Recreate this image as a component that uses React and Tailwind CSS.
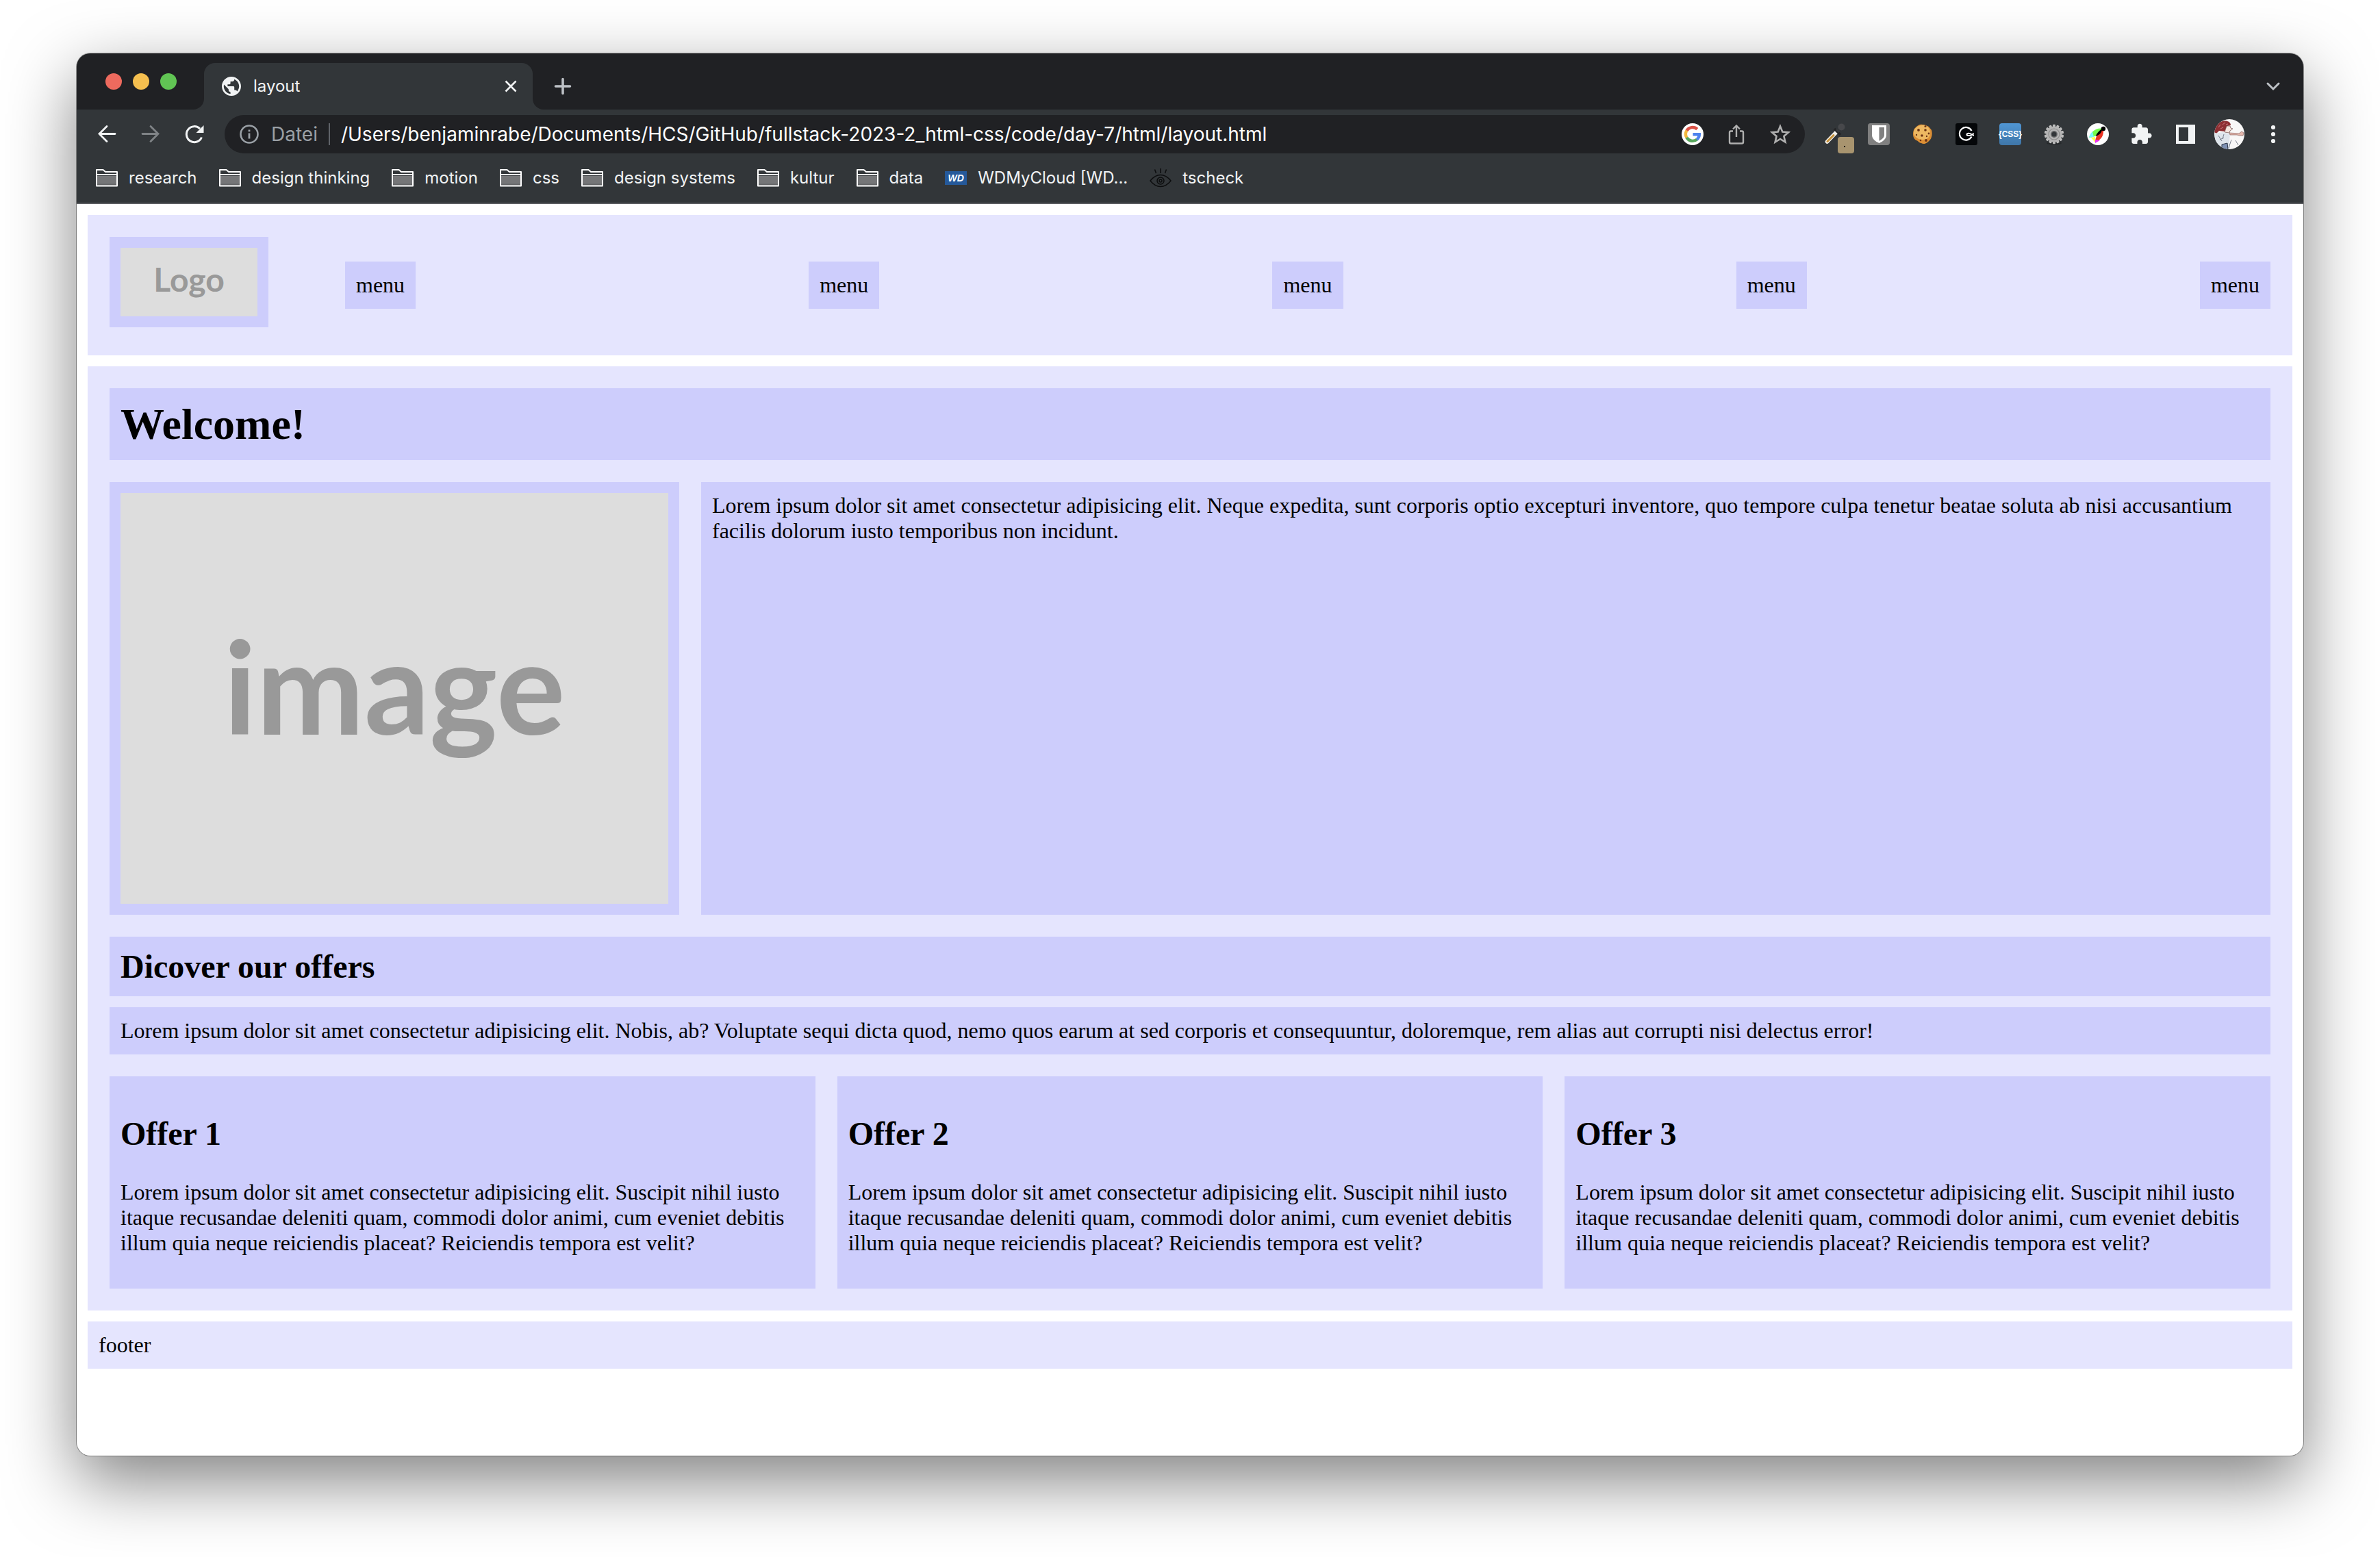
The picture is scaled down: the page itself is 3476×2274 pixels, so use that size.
import React from "react";
const UI = "font-['Inter','Liberation_Sans',sans-serif]";
const lorem = "Lorem ipsum dolor sit amet consectetur adipisicing elit.";
const heroText = `${lorem} Neque expedita, sunt corporis optio excepturi inventore, quo tempore culpa tenetur beatae soluta ab nisi accusantium facilis dolorum iusto temporibus non incidunt.`;
const introText = `${lorem} Nobis, ab? Voluptate sequi dicta quod, nemo quos earum at sed corporis et consequuntur, doloremque, rem alias aut corrupti nisi delectus error!`;
const offerText = `${lorem} Suscipit nihil iusto itaque recusandae deleniti quam, commodi dolor animi, cum eveniet debitis illum quia neque reiciendis placeat? Reiciendis tempora est velit?`;

function Svg({ size = "size-8", box = "0 0 32 32", label, children }) {
  return (
    <svg viewBox={box} className={`${size} shrink-0 overflow-visible`} fill="none" aria-hidden={label ? undefined : true} aria-label={label}>
      {children}
    </svg>
  );
}

function IconButton({ label, children }) {
  return (
    <button aria-label={label} className="flex w-16 shrink-0 items-center justify-center">
      {children}
    </button>
  );
}

function Globe() {
  return (
    <Svg size="size-7" box="2 2 20 20">
      <path fill="#f1f3f4" d="M12 2C6.480 2 2 6.480 2 12s4.480 10 10 10 10-4.480 10-10S17.520 2 12 2zm-1 17.930c-3.950-.49-7-3.850-7-7.930 0-.62.080-1.210.21-1.790L9 15v1c0 1.100.9 2 2 2v1.930zm6.900-2.540c-.26-.81-1-1.390-1.900-1.390h-1v-3c0-.55-.45-1-1-1H8v-2h2c.55 0 1-.45 1-1V7h2c1.100 0 2-.9 2-2v-.41c2.930 1.190 5 4.060 5 7.410 0 2.080-.8 3.970-2.100 5.390z" />
    </Svg>
  );
}

function Folder() {
  return (
    <Svg>
      <path d="M2 13h28v14H2z" fill="#757678" />
      <path d="M2 24.500h28V27H2z" fill="#636466" />
      <path d="M1 4h9.500l3.500 3h17v20.500H1zM1 11h30" stroke="#fff" strokeWidth="2" strokeLinejoin="round" />
    </Svg>
  );
}

function WdIcon() {
  return (
    <span className="flex h-5 w-8 shrink-0 items-center justify-center bg-[#25599a] font-['Liberation_Sans',sans-serif] text-sm font-bold italic leading-none text-white">
      WD
    </span>
  );
}

function EyeIcon() {
  return (
    <Svg>
      <path d="M1 20c4-5 9-8.500 15-8.500S27 15 31 20c-4 5-9 8.500-15 8.500S5 25 1 20zM16 2v7M7.500 3.500l2 5.500M24.500 3.500l-2 5.500" stroke="#0c0d0e" strokeWidth="1.500" />
      <circle cx="16" cy="20" r="5" stroke="#0c0d0e" strokeWidth="1.500" />
      <circle cx="16" cy="20" r="2" stroke="#0c0d0e" strokeWidth="1.500" />
    </Svg>
  );
}

const bookmarks = [
  ["research", Folder], ["design thinking", Folder], ["motion", Folder], ["css", Folder],
  ["design systems", Folder], ["kultur", Folder], ["data", Folder],
  ["WDMyCloud [WD...", WdIcon], ["tscheck", EyeIcon],
];

function TabStrip() {
  return (
    <div className="flex h-[82px] items-end bg-[#202124]">
      <div className="flex h-[82px] w-[186px] shrink-0 items-center gap-4 pl-[42px]">
        <button aria-label="Close window" className="size-6 rounded-full bg-[#ed6a5e]" />
        <button aria-label="Minimize window" className="size-6 rounded-full bg-[#f5bf4f]" />
        <button aria-label="Zoom window" className="size-6 rounded-full bg-[#61c554]" />
      </div>
      <div className="relative flex h-[68px] w-[480px] shrink-0 items-center rounded-t-2xl bg-[#323639] px-[26px]">
        <svg viewBox="0 0 16 16" className="absolute -left-4 bottom-0 size-4"><path d="M16 0v16H0A16 16 0 0 0 16 0z" fill="#323639" /></svg>
        <svg viewBox="0 0 16 16" className="absolute -right-4 bottom-0 size-4"><path d="M0 0v16h16A16 16 0 0 1 0 0z" fill="#323639" /></svg>
        <Globe />
        <span className="ml-[18px] flex-1 text-2xl leading-8 text-[#f1f3f4]">layout</span>
        <button aria-label="Close tab">
          <Svg size="size-3" box="0 0 12 12"><path d="M-1.500-1.500l15 15M13.500-1.500l-15 15" stroke="#f1f3f4" strokeWidth="2.600" /></Svg>
        </button>
      </div>
      <button aria-label="New tab" className="flex h-[68px] w-[88px] items-center justify-center">
        <Svg size="size-6" box="0 0 24 24"><path d="M12 1.500v21M1.500 12h21" stroke="#bdc1c6" strokeWidth="3.600" strokeLinecap="round" /></Svg>
      </button>
      <div className="flex-1" />
      <button aria-label="Search tabs" className="mr-3 flex h-[68px] w-16 items-center justify-center">
        <Svg size="size-5" box="0 0 20 20"><path d="M2 6l8 8 8-8" stroke="#bdc1c6" strokeWidth="3" strokeLinecap="round" /></Svg>
      </button>
    </div>
  );
}

function AddressBar() {
  return (
    <div className="flex h-14 min-w-0 flex-1 items-center rounded-full bg-[#202124] pl-[22px] pr-1">
      <Svg size="size-7" box="0 0 28 28">
        <circle cx="14" cy="14" r="12.500" stroke="#9aa0a6" strokeWidth="2.600" />
        <path d="M14 12.500v8M14 7.500v2.800" stroke="#9aa0a6" strokeWidth="2.800" />
      </Svg>
      <span className="ml-[18px] text-[28px] leading-8 text-[#9aa0a6]">Datei</span>
      <span className="ml-4 h-8 w-0.5 bg-[#5f6368]" />
      <input aria-label="Address" readOnly className="ml-4 min-w-0 flex-1 bg-transparent text-[28px] leading-9 text-white outline-none" value="/Users/benjaminrabe/Documents/HCS/GitHub/fullstack-2023-2_html-css/code/day-7/html/layout.html" />
      <IconButton label="Google">
        <Svg>
          <circle cx="16" cy="16" r="16" fill="#fff" />
          <path d="M7.400 10.800A10 10 0 0 1 22.800 8.700" stroke="#db5247" strokeWidth="4.400" />
          <path d="M7.500 21.100a10 10 0 0 1 0-10.500" stroke="#f4b93d" strokeWidth="4.400" />
          <path d="M22.400 23.600A10 10 0 0 1 7.400 20.900" stroke="#57a75c" strokeWidth="4.400" />
          <path d="M16.500 16.200h9.400a10 10 0 0 1-3.700 7.600" stroke="#4e83ee" strokeWidth="4.400" />
        </Svg>
      </IconButton>
      <IconButton label="Share">
        <Svg><path d="M11 11.500H8A2 2 0 0 0 6 13.500V27.500A2 2 0 0 0 8 29.500h16a2 2 0 0 0 2-2V13.500a2 2 0 0 0-2-2H21M16 20V4M11 8.500l5-5 5 5" stroke="#b0b0b0" strokeWidth="2.400" /></Svg>
      </IconButton>
      <IconButton label="Bookmark this page">
        <Svg><path d="M16 4.500l3.300 8 8.700.8-6.600 5.700 2 8.500L16 23l-7.400 4.500 2-8.500L4 13.300l8.700-.8z" stroke="#b0b0b0" strokeWidth="2.600" /></Svg>
      </IconButton>
    </div>
  );
}

const gearTeeth = Array.from({ length: 14 }, (_, i) => (i * 360) / 14);

function Extensions() {
  return (
    <div className="flex h-14 shrink-0 items-center px-3">
      <IconButton label="Color picker">
        <span className="relative size-8">
          <Svg>
            <path d="M4.500 27L18 13" stroke="#f4f1ea" strokeWidth="5.500" strokeLinecap="round" />
            <path d="M5 26.500L14 17.500" stroke="#c5913a" strokeWidth="3" strokeLinecap="round" />
            <path d="M15 8l9 9" stroke="#242526" strokeWidth="3.500" />
            <path d="M19 12l2-2" stroke="#38393b" strokeWidth="6" />
            <circle cx="25.500" cy="5.500" r="5" fill="#47484b" />
          </Svg>
          <span className="absolute left-5 top-5 flex size-6 items-center justify-center rounded bg-[#a8946f]"><span className="mt-1 mr-1 size-0.5 bg-black" /></span>
        </span>
      </IconButton>
      <IconButton label="Bitwarden">
        <Svg>
          <rect width="32" height="32" rx="4" fill="#808080" />
          <path d="M6 3h21v14c0 6-5 9.500-10.500 12C11 26.500 6 23 6 17z" fill="#fff" />
          <path d="M16.500 6H24v11c0 4-3.500 6.500-7.500 8.800z" fill="#808080" />
        </Svg>
      </IconButton>
      <IconButton label="Cookies">
        <Svg>
          <path d="M16 2c3-.5 5 1 7 2 3 1 4 4 6 6 1 3 1 7 0 10-1 4-4 6-6 8-3 2-6 3-9 1-3 0-4-3-7-4-4-2-5-6-5-9 0-4 1-8 4-10 3-3 6-5 10-4z" fill="#dc8f35" />
          <path d="M15 3c7-1 12 4 12 11s-5 10-11 10S3 20 3 14 8 3 15 3z" fill="#edb862" />
          <g fill="#6d3415"><circle cx="10" cy="10" r="1.900" /><circle cx="20" cy="10" r="1.800" /><circle cx="15" cy="18" r="1.800" /><circle cx="7" cy="17" r="1.200" /><circle cx="25" cy="15" r="1.400" /><circle cx="21" cy="25" r="1.900" /><circle cx="22" cy="19" r="1.200" /><circle cx="13" cy="25" r="1.300" /><circle cx="20" cy="4.500" r="1.500" /></g>
        </Svg>
      </IconButton>
      <IconButton label="Grammar">
        <Svg>
          <rect width="32" height="32" rx="3" fill="#050709" />
          <path d="M23.500 11A9.300 9.300 0 1 0 23.500 19.500" stroke="#fff" strokeWidth="2.200" />
          <path d="M26.500 14.500c-2 3-4.500 3.600-7 3.600-4 0-4-3.400 0-3.400 3 0 4 2.500 7.500 3" stroke="#fff" strokeWidth="1.900" />
        </Svg>
      </IconButton>
      <IconButton label="CSS viewer">
        <span className="flex size-8 items-center justify-center rounded-sm bg-linear-to-b from-[#5096d4] to-[#3f76a8] font-['Liberation_Sans',sans-serif] text-xs font-bold leading-none text-white">{"{CSS}"}</span>
      </IconButton>
      <IconButton label="Settings">
        <Svg>
          <ellipse cx="16" cy="29" rx="11" ry="2.500" fill="#26292b" />
          {gearTeeth.map((a) => <rect key={a} x="14" y="1.800" width="4" height="7" rx="1" fill="#bdbdbd" transform={`rotate(${a} 16 16)`} />)}
          <circle cx="16" cy="16" r="8" stroke="#b4b4b4" strokeWidth="7" />
          <circle cx="16" cy="16" r="8" stroke="#8c8c8c" strokeWidth="1.200" />
          <circle cx="16" cy="16" r="5" fill="#6a6b6c" />
          <circle cx="16" cy="16" r="3.500" fill="#323639" />
        </Svg>
      </IconButton>
      <IconButton label="Color blindness">
        <Svg>
          <circle cx="16" cy="16" r="16" fill="#fff" />
          <path d="M3 21C6 12 14 6 23 8c-3 7-9 12-20 13z" fill="#75fb4c" />
          <path d="M3 21c1-4 3-7 5-9l2 8z" fill="#7df9f9" />
          <path d="M12 28c0-8 4-14 12-20 1 10-3 16-12 20z" fill="#eb3223" />
          <path d="M6 21l6-1v8z" fill="#ffff54" />
          <path d="M12 29v-5l7 1z" fill="#ea33f7" />
          <path d="M12.500 19c2-5 6-9 10-11-1 6-4 9-10 11z" fill="#000" />
          <circle cx="24" cy="8" r="3.200" fill="#000" />
        </Svg>
      </IconButton>
      <IconButton label="Extensions">
        <Svg box="1 .5 23 23"><path fill="#f1f3f4" d="M20.500 11H19V7c0-1.100-.9-2-2-2h-4V3.500C13 2.120 11.880 1 10.500 1S8 2.120 8 3.500V5H4c-1.100 0-1.990.9-1.990 2v3.800H3.500c1.490 0 2.700 1.210 2.700 2.700s-1.210 2.700-2.700 2.700H2V20c0 1.100.9 2 2 2h3.800v-1.500c0-1.490 1.210-2.700 2.700-2.700s2.700 1.210 2.700 2.700V22H17c1.100 0 2-.9 2-2v-4h1.500c1.380 0 2.500-1.120 2.500-2.500S21.880 11 20.500 11z" /></Svg>
      </IconButton>
      <IconButton label="Side panel">
        <Svg><path d="M2 2h28v28H2zM6 6v20h14V6z" fill="#f1f3f4" fillRule="evenodd" /></Svg>
      </IconButton>
      <IconButton label="Profile">
        <Svg size="size-11" box="0 0 44 44">
          <clipPath id="avatar"><circle cx="22" cy="22" r="22" /></clipPath>
          <g clipPath="url(#avatar)">
            <rect width="44" height="44" fill="#f8f7f7" />
            <path d="M0 19C2 6 11 1 19 3c4 1 5 4 5 6l-5 1-4 8-8-1-4 4z" fill="#8e2f33" />
            <path d="M6 12l3-4M12 8l4-3M9 14l4-2M17 8l3-1" stroke="#d98f8f" strokeWidth=".8" />
            <path d="M18 10l5 0 1 3 3 1-4 3-1 3-7-1z" fill="#f5e4dd" stroke="#6b4a48" strokeWidth=".7" />
            <path d="M0 21l13-2 10 3-1 10 1 12H10L2 34z" fill="#dfe5ec" />
            <path d="M11 37l8-2 1 9h-9z" fill="#7f92b4" stroke="#2d3646" strokeWidth="1" />
            <path d="M22 20l14 1 4-3 3 2-1 4-5 0-4-1-10 0z" fill="#e3b5aa" stroke="#8b6661" strokeWidth=".7" />
            <path d="M6 24l5 8M14 22l-2 7M8 30l6-3M25 30l-4 12M31 31l4 7" stroke="#6d7482" strokeWidth=".9" />
          </g>
        </Svg>
      </IconButton>
      <IconButton label="Menu">
        <Svg><g fill="#f1f3f4"><circle cx="16" cy="6" r="3.100" /><circle cx="16" cy="16" r="3.100" /><circle cx="16" cy="26" r="3.100" /></g></Svg>
      </IconButton>
    </div>
  );
}

function Toolbar() {
  return (
    <div className="flex h-[72px] items-center pl-3">
      <IconButton label="Back"><Svg><path d="M28 15.500H5M16 4.500L5 15.500l11 11" stroke="#f1f3f4" strokeWidth="2.800" strokeLinecap="round" /></Svg></IconButton>
      <IconButton label="Forward"><Svg><path d="M4 15.500h23M16 4.500l11 11-11 11" stroke="#7f8386" strokeWidth="2.800" strokeLinecap="round" /></Svg></IconButton>
      <IconButton label="Reload"><Svg><path d="M26.500 20.500A11.500 11.500 0 1 1 24 8" stroke="#f1f3f4" strokeWidth="3" /><path d="M29.500 3v11h-11z" fill="#f1f3f4" /></Svg></IconButton>
      <div className="w-3 shrink-0" />
      <AddressBar />
      <Extensions />
    </div>
  );
}

function Bookmarks() {
  return (
    <nav aria-label="Bookmarks" className="flex h-14 items-center gap-8 pl-7">
      {bookmarks.map(([name, Icon]) => (
        <a key={name} href="#" className="flex items-center gap-4 whitespace-nowrap text-2xl leading-8 text-[#f1f3f4]"><Icon />{name}</a>
      ))}
    </nav>
  );
}

function Page() {
  return (
    <div className="flex flex-col gap-4 p-4 font-['Liberation_Serif',serif] text-[32px] leading-[37px] text-black">
      <header className="flex gap-28 bg-[#e5e5fe] p-8">
        <div className="mb-[9px] bg-[#cdcdfc] p-4">
          <div className="flex h-[100px] w-[200px] items-center justify-center bg-[#ddd] pb-2 font-['Lato',sans-serif] text-5xl font-bold leading-none text-[#999]">Logo</div>
        </div>
        <nav className="flex flex-1 items-center justify-between">
          {[1, 2, 3, 4, 5].map((n) => <a key={n} href="#" className="bg-[#cdcdfc] p-4">menu</a>)}
        </nav>
      </header>
      <main className="flex flex-col bg-[#e5e5fe] p-8">
        <h1 className="bg-[#cdcdfc] p-4 text-[64px] font-bold leading-[73px]">Welcome!</h1>
        <section className="mt-8 flex gap-8">
          <div className="shrink-0 bg-[#cdcdfc] p-4">
            <div className="flex h-[600px] w-[800px] items-center justify-center bg-[#ddd] pb-10 font-['Lato',sans-serif] text-[188px] font-bold leading-none text-[#999]">image</div>
          </div>
          <p className="flex-1 bg-[#cdcdfc] p-4">{heroText}</p>
        </section>
        <h2 className="mt-8 bg-[#cdcdfc] p-4 text-5xl font-bold leading-[55px]">Dicover our offers</h2>
        <p className="mt-4 bg-[#cdcdfc] p-4">{introText}</p>
        <section className="mt-8 grid grid-cols-3 gap-8">
          {[1, 2, 3].map((n) => (
            <article key={n} className="bg-[#cdcdfc] px-4 pb-12 pt-14">
              <h2 className="mb-10 text-5xl font-bold leading-[55px]">{`Offer ${n}`}</h2>
              <p>{offerText}</p>
            </article>
          ))}
        </section>
      </main>
      <footer className="bg-[#e5e5fe] p-4">footer</footer>
    </div>
  );
}

export default function App() {
  return (
    <div className="min-h-screen bg-white px-28 pb-[148px] pt-[78px]">
      <div className="flex min-h-[2048px] flex-col overflow-hidden rounded-[20px] bg-white shadow-[0_0_0_1px_rgba(0,0,0,0.35),0_36px_100px_rgba(0,0,0,0.5)]">
        <div className={`${UI} border-b-2 border-[#5b5d60] bg-[#323639] pb-2`}>
          <TabStrip />
          <Toolbar />
          <Bookmarks />
        </div>
        <Page />
      </div>
    </div>
  );
}
